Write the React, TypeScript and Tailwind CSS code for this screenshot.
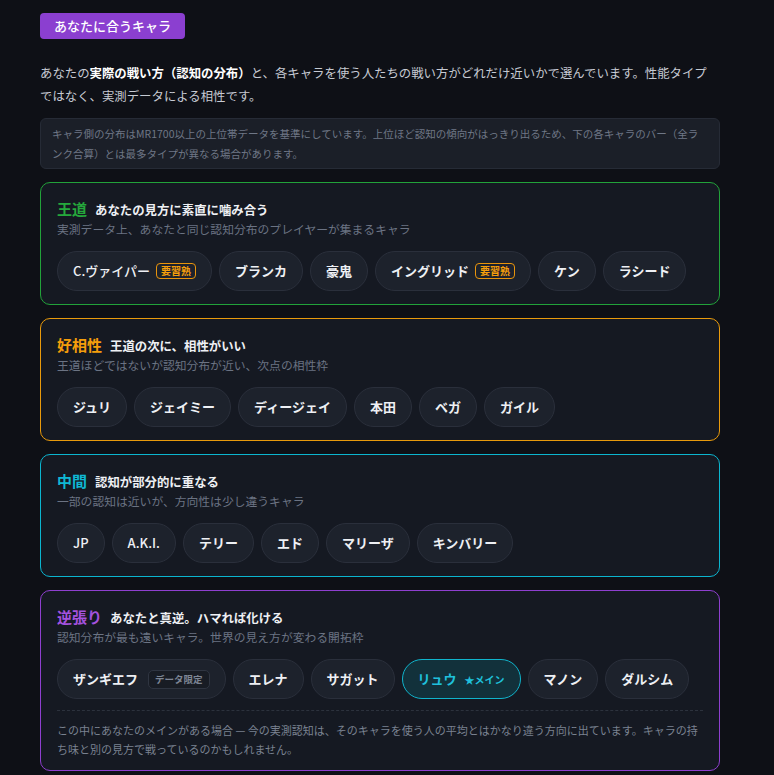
import React from "react";

type Chara = { name: string; badge?: "skill" | "data"; main?: boolean };

type Tier = {
  label: string;
  title: string;
  desc: string;
  border: string;
  color: string;
  charas: Chara[];
  note?: boolean;
};

const tiers: Tier[] = [
  {
    label: "王道",
    title: "あなたの見方に素直に噛み合う",
    desc: "実測データ上、あなたと同じ認知分布のプレイヤーが集まるキャラ",
    border: "border-[#22a23a]",
    color: "text-[#25a83c]",
    charas: [
      { name: "C.ヴァイパー", badge: "skill" },
      { name: "ブランカ" },
      { name: "豪鬼" },
      { name: "イングリッド", badge: "skill" },
      { name: "ケン" },
      { name: "ラシード" },
    ],
  },
  {
    label: "好相性",
    title: "王道の次に、相性がいい",
    desc: "王道ほどではないが認知分布が近い、次点の相性枠",
    border: "border-[#e89a0c]",
    color: "text-[#f59e0b]",
    charas: [
      { name: "ジュリ" },
      { name: "ジェイミー" },
      { name: "ディージェイ" },
      { name: "本田" },
      { name: "ベガ" },
      { name: "ガイル" },
    ],
  },
  {
    label: "中間",
    title: "認知が部分的に重なる",
    desc: "一部の認知は近いが、方向性は少し違うキャラ",
    border: "border-[#0bb5cf]",
    color: "text-[#0fb8d4]",
    charas: [
      { name: "JP" },
      { name: "A.K.I." },
      { name: "テリー" },
      { name: "エド" },
      { name: "マリーザ" },
      { name: "キンバリー" },
    ],
  },
  {
    label: "逆張り",
    title: "あなたと真逆。ハマれば化ける",
    desc: "認知分布が最も遠いキャラ。世界の見え方が変わる開拓枠",
    border: "border-[#8e3fcf]",
    color: "text-[#a452df]",
    charas: [
      { name: "ザンギエフ", badge: "data" },
      { name: "エレナ" },
      { name: "サガット" },
      { name: "リュウ", main: true },
      { name: "マノン" },
      { name: "ダルシム" },
    ],
    note: true,
  },
];

function Pill({ c }: { c: Chara }) {
  if (c.main) {
    return (
      <div className="h-10 flex items-center gap-2 px-[15px] rounded-full border border-[#10b4cc] bg-[#12313b] text-[13px] font-bold text-[#1fc0dc]">
        <span>{c.name}</span>
        <span className="text-[10px]">★メイン</span>
      </div>
    );
  }
  return (
    <div className="h-10 flex items-center gap-1.5 px-[15px] rounded-full border border-[#2a2f3b] bg-[#1d222c] text-[13px] font-bold text-[#eef0f4]">
      <span className={c.name === "C.ヴァイパー" || c.name === "JP" || c.name === "A.K.I." ? "font-medium" : ""}>
        {c.name}
      </span>
      {c.badge === "skill" && (
        <span className="px-1 leading-[14px] rounded-[4px] border border-[#e8940c] text-[10px] font-bold text-[#f59e0b]">
          要習熟
        </span>
      )}
      {c.badge === "data" && (
        <span className="ml-1 px-1.5 leading-[17px] rounded-[5px] border border-[#2f3541] bg-[#181c24] text-[9.5px] font-bold text-[#7d8594]">
          データ限定
        </span>
      )}
    </div>
  );
}

export default function App() {
  return (
    <div
      className="min-h-screen bg-[#0e1016] pt-3 pb-4"
      style={{ fontFamily: '"Noto Sans CJK JP", "Noto Sans", sans-serif' }}
    >
      <div className="w-[680px] ml-10">
        <span className="inline-block h-[26px] leading-[26px] px-3.5 rounded-[4px] bg-[#8b3fd0] text-[13px] font-medium text-white">
          あなたに合うキャラ
        </span>

        <p className="mt-[23px] max-w-[675px] text-[12.4px] leading-[23px] text-[#c6cad3]">
          あなたの<b className="font-bold text-white">実際の戦い方（認知の分布）</b>
          と、各キャラを使う人たちの戦い方がどれだけ近いかで選んでいます。性能タイプではなく、実測データによる相性です。
        </p>

        <div className="mt-[10px] px-[11px] py-[4.5px] rounded-[6px] border border-[#262b36] bg-[#1b1f28] text-[10.5px] leading-[20px] text-[#6f7786]">
          キャラ側の分布はMR1700以上の上位帯データを基準にしています。上位ほど認知の傾向がはっきり出るため、下の各キャラのバー（全ランク合算）とは最多タイプが異なる場合があります。
        </div>

        <div className="mt-[13px] flex flex-col gap-[13px]">
          {tiers.map((t) => (
            <section
              key={t.label}
              className={`rounded-[10px] border ${t.border} bg-[#151922] px-4 pt-4 ${t.note ? "pb-[11px]" : "pb-[13px]"}`}
            >
              <div className="flex items-baseline gap-2 leading-5">
                <span className={`text-[15px] font-bold ${t.color}`}>{t.label}</span>
                <span className="text-[12.4px] font-bold text-[#eef0f4]">{t.title}</span>
              </div>
              <p className="text-[11.8px] leading-[18px] text-[#6b7383]">{t.desc}</p>
              <div className="mt-[13px] flex flex-wrap gap-[7px]">
                {t.charas.map((c) => (
                  <Pill key={c.name} c={c} />
                ))}
              </div>
              {t.note && (
                <p className="mt-[11px] pt-[10px] border-t border-dashed border-[#2c323d] text-[11px] leading-[19px] text-[#7a8291]">
                  この中にあなたのメインがある場合 — 今の実測認知は、そのキャラを使う人の平均とはかなり違う方向に出ています。キャラの持ち味と別の見方で戦っているのかもしれません。
                </p>
              )}
            </section>
          ))}
        </div>
      </div>
    </div>
  );
}
